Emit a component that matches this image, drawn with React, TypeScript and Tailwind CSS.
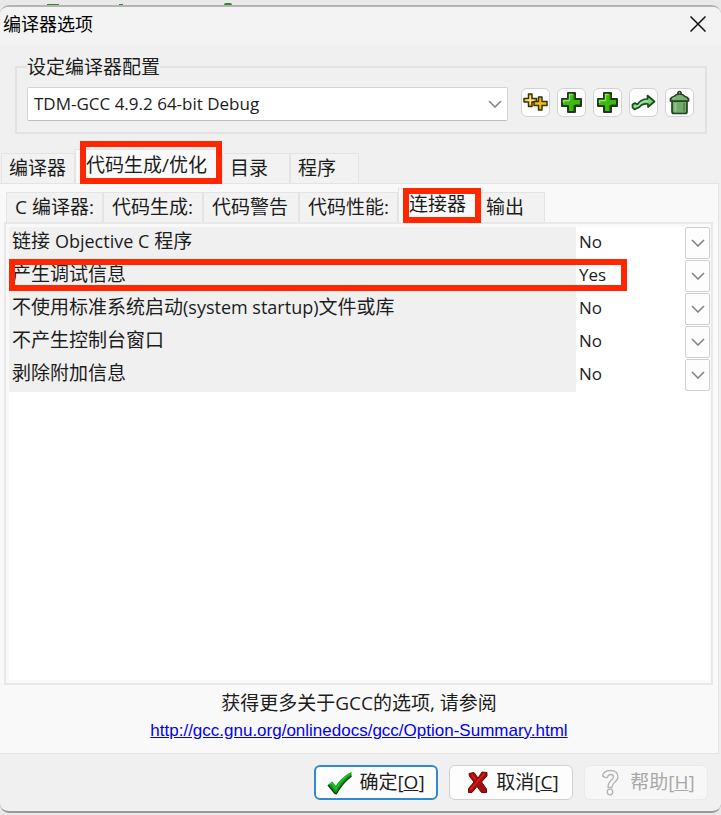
import React, { useState } from 'react';

const OPTIONS = [
    { id: 'objc', label: <>链接 <span className="text-[18px]">Objective C</span> 程序</>, value: 'No' },
    { id: 'debug', label: '产生调试信息', value: 'Yes', marked: true },
    { id: 'nostartup', label: <>不使用标准系统启动<span className="text-[18px]">(system startup)</span>文件或库</>, value: 'No' },
    { id: 'noconsole', label: '不产生控制台窗口', value: 'No' },
    { id: 'strip', label: '剥除附加信息', value: 'No' },
];

const MAIN_TABS = [
    { name: '编译器', width: 'w-[74px]' },
    { name: '代码生成/优化', width: 'w-[147px]', marked: true },
    { name: '目录', width: 'w-[68px]' },
    { name: '程序', width: 'w-[69px]' },
];

const SUB_TABS = [
    { name: 'C 编译器:', width: 'w-[97px]' },
    { name: '代码生成:', width: 'w-[100px]' },
    { name: '代码警告', width: 'w-[96px]' },
    { name: '代码性能:', width: 'w-[99px]' },
    { name: '连接器', width: 'w-[83px]', marked: true },
    { name: '输出', width: 'w-[64px]' },
];

const Chevron = () => (
    <svg width="14" height="8" viewBox="0 0 14 8" fill="none" stroke="#858585" strokeWidth="1.6">
        <path d="M1 1l6 6 6-6" />
    </svg>
);

const PlusIcon = () => (
    <svg width="23" height="23" viewBox="0 0 23 23">
        <path d="M8 2h7v6h6v7h-6v6H8v-6H2V8h6z" fill="#3dbb0c" stroke="#26351f" strokeWidth="2" strokeLinejoin="round" />
        <path d="M9.500 9.500V3.500h3M3.500 12V9.500h6" fill="none" stroke="#8be968" strokeWidth="1.400" />
        <path d="M14 4v5M15 13.500h5M13.500 14v6" fill="none" stroke="#258606" strokeWidth="1.200" />
    </svg>
);

const DoublePlusIcon = () => (
    <svg width="25" height="21" viewBox="0 0 25 21" strokeLinejoin="round">
        <path d="M5.500 2H9v4.500h4.500V10H9v4.500H5.500V10H1V6.500h4.500z" fill="#f3c811" stroke="#38300f" strokeWidth="1.500" />
        <path d="M15.500 5H19v4.500h5V13.500h-5V18h-3.500v-4.500H11V9.500h4.500z" fill="#efbd0a" stroke="#38300f" strokeWidth="1.500" />
        <path d="M7.200 4v8M3 8.200h8" stroke="#fff0a8" strokeWidth="1" />
    </svg>
);

const ArrowIcon = () => (
    <svg width="25" height="17" viewBox="0 0 25 17">
        <path
            d="M1.500 10.500L4 9l2.500 1.500C8.500 7 12 5 16.500 5V1.500L23.500 7.500 17 13V10c-3.500-.5-6.500 0-8.500 3L3.500 15.500 1.500 13.500z"
            fill="#68dc6c"
            stroke="#24452b"
            strokeWidth="1.700"
            strokeLinejoin="round"
        />
        <path d="M3.500 12.500l4-1C10 8 13 7 17.500 7" fill="none" stroke="#a5f3a2" strokeWidth="1.200" />
    </svg>
);

const TrashIcon = () => (
    <svg width="21" height="25" viewBox="0 0 21 25" stroke="#263d25" strokeWidth="1.700" strokeLinejoin="round">
        <path d="M9 4V2.500Q10.500 .5 12 2.500V4" fill="none" />
        <path d="M3 11h15v10.500q0 2-2 2H5q-2 0-2-2z" fill="#71aa69" />
        <path d="M1.500 11V9Q2.500 7 5 6.500 7 4 10.500 4T16 6.500q2.500.5 3.500 2.500v2z" fill="#74b46c" />
        <path d="M6.500 13v8.500M6 7.500l-2 1.500" stroke="#93c98a" strokeWidth="2" />
        <path d="M15 13v8.500" stroke="#548d4f" strokeWidth="2" />
    </svg>
);

const CheckIcon = () => (
    <svg width="26" height="24" viewBox="0 0 26 24">
        <path d="M1 14l4-3.500 4 4.500C12.500 9 18 4 24.500 1v4C18.500 9.500 13.500 15.500 9.500 22.500H8z" fill="#0b9c10" />
        <path d="M1 14l7 8.500h1.500C13.500 15.500 18.500 9.500 24.500 5" fill="none" stroke="#153b1a" strokeWidth="1.400" />
        <path d="M3 13l1.500-1 4.500 6C13 11 18 6 23 2.500" fill="none" stroke="#25c92a" strokeWidth="1.300" />
    </svg>
);

const CrossIcon = () => (
    <svg width="21" height="23" viewBox="0 0 21 23">
        <path
            d="M2 2.500L7 1.500l4 5.500 4-6 5 .5v3.500L14.500 11l5 7v3.500h-5L10 15.500 5 21.500H1.500v-4L7 11 2.500 5.500z"
            fill="#a20d0d"
            stroke="#6c0808"
            strokeWidth="1"
            strokeLinejoin="round"
        />
        <path d="M4.500 3.500l4 5M17.500 2.500L3 19" fill="none" stroke="#e11b12" strokeWidth="1.800" />
    </svg>
);

const HelpIcon = () => (
    <svg width="19" height="27" viewBox="0 0 19 27" fill="#f7f7f7" stroke="#b4b4b4" strokeWidth="1.300" strokeLinejoin="round">
        <path d="M1.500 7Q2.500 1.500 9.500 1.500t7.500 6q0 3.500-3.500 6-2.500 2-2.500 5H7q0-4.500 3-7 2.500-2 2.500-3.500 0-2.500-3-2.500-2.500 0-3 3-3 .5-4.500-1.500z" />
        <circle cx="9" cy="23" r="2.800" />
    </svg>
);

const TOOLS = [
    { title: '添加空白配置', icon: <DoublePlusIcon /> },
    { title: '添加编译器', icon: <PlusIcon /> },
    { title: '查找编译器', icon: <PlusIcon /> },
    { title: '重命名', icon: <ArrowIcon /> },
    { title: '删除', icon: <TrashIcon /> },
];

export default function App() {
    const [mainTab, setMainTab] = useState('代码生成/优化');
    const [subTab, setSubTab] = useState('连接器');

    return (
        <div className="min-h-screen flex flex-col bg-[#e9e9e9] text-[#1c1c1c] font-['Open_Sans','Noto_Sans_CJK_SC',sans-serif]">
            {/* Editor text behind the dialog */}
            <div className="h-[5px] flex items-end">
                <span className="ml-[47px] w-3 h-px bg-[#2c8a2c]"></span>
                <span className="ml-[60px] w-1 h-px bg-[#2c8a2c]"></span>
                <span className="ml-[101px] w-2 h-0.5 bg-[#2c8a2c] rounded-t-full"></span>
            </div>

            <div className="flex-1 flex flex-col bg-[#f0f0f0] border-y-2 border-t-[#b4b4b4] border-b-[#999999] rounded-[9px] mb-0.5 overflow-hidden">
                {/* Title bar */}
                <header className="h-[38px] pb-1 pl-[3px] pr-[15px] flex items-center justify-between bg-[#f3f3f3]">
                    <h1 className="text-[18px] leading-6 text-black">编译器选项</h1>
                    <button aria-label="关闭" className="size-4">
                        <svg width="16" height="16" viewBox="0 0 16 16" stroke="#111" strokeWidth="1.5">
                            <path d="M.5 .5l15 15M15.500 .5l-15 15" />
                        </svg>
                    </button>
                </header>

                {/* Compiler set */}
                <fieldset className="mt-2.5 ml-[15px] mr-[14px] h-[79px] border-2 border-[#e2e2e2] pl-2.5 pr-[11px]">
                    <legend className="text-[19px] leading-6">设定编译器配置</legend>
                    <div className="mt-2 flex items-start">
                        <div className="relative flex-1">
                            <select
                                aria-label="设定编译器配置"
                                className="appearance-none w-full h-[34px] pl-1.5 pr-8 bg-white border border-[#d4d4d4] border-b-[#bdbdbd] rounded-xs text-[17px]"
                            >
                                <option>TDM-GCC 4.9.2 64-bit Debug</option>
                            </select>
                            <span className="absolute right-1.5 inset-y-0 flex items-center pointer-events-none"><Chevron /></span>
                        </div>
                        <div className="ml-[13px] mt-px flex gap-[7px]">
                            {TOOLS.map(tool => (
                                <button
                                    key={tool.title}
                                    aria-label={tool.title}
                                    className="size-[29px] flex items-center justify-center bg-[#fdfdfd] border border-[#d2d2d2] rounded-md"
                                >
                                    {tool.icon}
                                </button>
                            ))}
                        </div>
                    </div>
                </fieldset>

                {/* Main tabs */}
                <div role="tablist" className="mt-[15px] pl-px flex items-end">
                    {MAIN_TABS.map(tab => (
                        <button
                            key={tab.name}
                            role="tab"
                            aria-selected={mainTab === tab.name}
                            onClick={() => setMainTab(tab.name)}
                            className={`relative ${tab.width} border border-b-0 border-[#e4e4e4] text-[19px] leading-7 text-left whitespace-nowrap
                                ${mainTab === tab.name ? 'h-[34px] pb-1 bg-[#f9f9f9] pl-2.5' : 'h-[30px] pb-0.5 bg-[#f2f2f2] pl-[7px]'}`}
                        >
                            {tab.name}
                            {tab.marked && <span className="absolute left-1 -right-px -top-[9px] -bottom-px z-10 border-6 border-[#ff2600]"></span>}
                        </button>
                    ))}
                </div>

                <main className="flex-1 flex flex-col bg-[#f9f9f9] border border-l-0 border-[#e4e4e4] mr-0.5 pt-1">
                    {/* Sub tabs */}
                    <div role="tablist" className="pl-1.5 flex items-end">
                        {SUB_TABS.map(tab => (
                            <button
                                key={tab.name}
                                role="tab"
                                aria-selected={subTab === tab.name}
                                onClick={() => setSubTab(tab.name)}
                                className={`relative ${tab.width} border border-b-0 border-[#e4e4e4] text-[19px] leading-7 text-left whitespace-nowrap
                                    ${subTab === tab.name ? 'h-[34px] pb-1 bg-[#f9f9f9]' : 'h-[30px] pb-0.5 bg-[#f2f2f2]'}
                                    ${subTab === tab.name ? 'pl-2.5' : tab.name === '输出' ? 'pl-1' : 'pl-2'}`}
                            >
                                {tab.name}
                                {tab.marked && <span className="absolute left-1 -right-px -top-px -bottom-px z-10 border-6 border-[#ff2600]"></span>}
                            </button>
                        ))}
                    </div>

                    {/* Option list */}
                    <section className="flex-1 ml-1 mr-[5px] border-2 border-[#e8e8e8] p-[3px] pr-px flex flex-col">
                        <div className="flex-1 bg-white">
                            {OPTIONS.map(opt => (
                                <div key={opt.id} className="relative h-[33px] flex">
                                    <label htmlFor={opt.id} className="flex-1 bg-[#f0f0f0] pl-[3px] text-[19px] leading-7">
                                        {opt.label}
                                    </label>
                                    <div className="relative w-[134px]">
                                        <select
                                            id={opt.id}
                                            defaultValue={opt.value}
                                            className="appearance-none w-full h-[30px] pl-[3px] bg-white text-[17px]"
                                        >
                                            <option>No</option>
                                            <option>Yes</option>
                                        </select>
                                        <span className="absolute right-0 top-0 w-[25px] h-8 flex items-center justify-center bg-[#fdfdfd] border border-[#d0d0d0] rounded-xs pointer-events-none">
                                            <Chevron />
                                        </span>
                                    </div>
                                    {opt.marked && <span className="absolute left-0 right-[83px] -top-px bottom-0.5 border-6 border-[#ff2600] pointer-events-none"></span>}
                                </div>
                            ))}
                        </div>
                    </section>

                    <div className="h-[68px] pt-1 text-center">
                        <p className="text-[19px] leading-7">获得更多关于GCC的选项, 请参阅</p>
                        <a
                            href="http://gcc.gnu.org/onlinedocs/gcc/Option-Summary.html"
                            className="text-[17px] leading-7 text-[#0000f5] underline font-['Liberation_Sans',sans-serif]"
                        >
                            http://gcc.gnu.org/onlinedocs/gcc/Option-Summary.html
                        </a>
                    </div>
                </main>

                {/* Dialog buttons */}
                <footer className="h-[57px] pt-[11px] pr-[13px] flex justify-end gap-[11px] text-[19px]">
                    <button className="w-[124px] h-[35px] flex items-center justify-center gap-1.5 bg-[#fdfdfd] border-2 border-[#2f8bd0] rounded-md whitespace-nowrap">
                        <CheckIcon />
                        <span>确定[<u>O</u>]</span>
                    </button>
                    <button className="w-[124px] h-[35px] pl-1 flex items-center justify-center gap-2 bg-[#fdfdfd] border border-[#d0d0d0] rounded-md whitespace-nowrap">
                        <CrossIcon />
                        <span>取消[<u>C</u>]</span>
                    </button>
                    <button disabled className="w-[124px] h-[35px] pl-1 flex items-center justify-center gap-2.5 bg-[#f7f7f7] border border-[#eaeaea] rounded-md text-[#a8a8a8] whitespace-nowrap">
                        <HelpIcon />
                        <span>帮助[<u>H</u>]</span>
                    </button>
                </footer>
            </div>
        </div>
    );
}
